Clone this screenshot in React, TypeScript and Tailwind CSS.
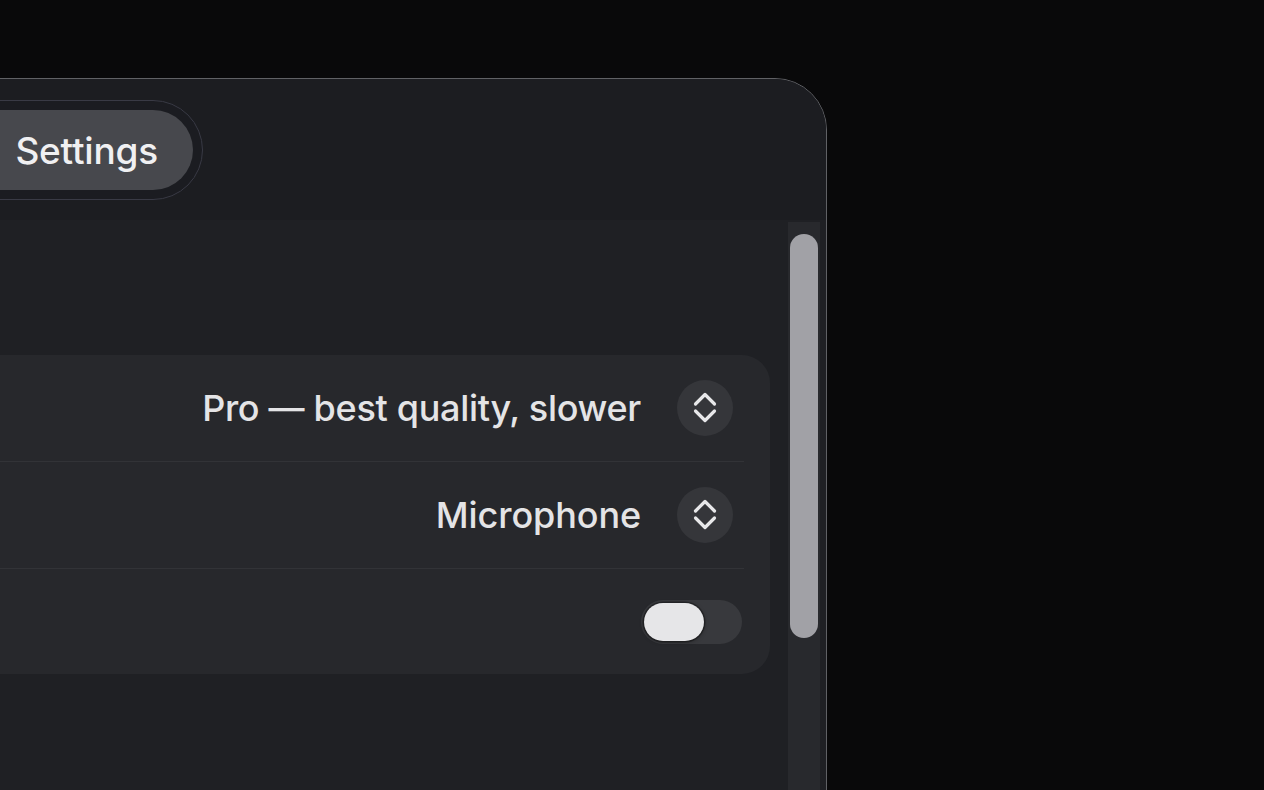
import React from "react";

function Chevrons() {
  return (
    <svg width="24" height="32" viewBox="0 0 24 32" fill="none">
      <path d="M2.5 12 L12 2.5 L21.5 12" stroke="#e8e8ea" strokeWidth="3.2" strokeLinecap="round" strokeLinejoin="round" />
      <path d="M2.5 19 L12 28.5 L21.5 19" stroke="#e8e8ea" strokeWidth="3.2" strokeLinecap="round" strokeLinejoin="round" />
    </svg>
  );
}

function SelectRow({ value, tight }: { value: string; tight?: boolean }) {
  return (
    <div className="mr-[26px] flex h-[107px] items-center justify-end border-b border-[#323337]">
      <span
        className={
          tight
            ? "text-[36px] font-[450] leading-none text-[#e4e4e6] tracking-[-0.3px]"
            : "text-[36px] font-[450] leading-none text-[#e4e4e6] tracking-[-0.1px]"
        }
      >
        {value}
      </span>
      <div className="ml-[36px] mr-[11px] flex h-[56px] w-[56px] items-center justify-center rounded-full bg-[#35363a]">
        <Chevrons />
      </div>
    </div>
  );
}

export default function App() {
  return (
    <div
      className="h-[790px] w-[1264px] overflow-hidden bg-[#09090a] pt-[78px]"
      style={{ fontFamily: "Inter, 'Noto Sans', sans-serif" }}
    >
      <div className="-ml-[100px] h-[760px] w-[927px] overflow-hidden rounded-tr-[52px] border border-[#606165] bg-[#1f2024]">
        {/* header */}
        <div className="h-[141px] bg-[#1c1d21] pt-[21px]">
          <div className="-ml-[40px] flex h-[100px] w-[342px] items-center rounded-full border border-[#393a45] bg-[#1b1c21] px-[9px]">
            <div className="flex h-[80px] flex-1 items-center justify-end rounded-full bg-[#47484d] pr-[35px]">
              <span className="text-[37px] font-[450] leading-none text-[#f0f0f2] tracking-[-0.2px]">Settings</span>
            </div>
          </div>
        </div>
        {/* body */}
        <div className="flex h-[620px] pr-[6px]">
          <div className="flex-1 pr-[18px] pt-[135px]">
            <div className="rounded-[28px] bg-[#27282c]">
              <SelectRow value="Pro — best quality, slower" tight />
              <SelectRow value="Microphone" />
              <div className="flex h-[105px] items-center justify-end pr-[28px]">
                <div className="flex h-[44px] w-[101px] items-center rounded-full bg-[#38393d] px-[3px]">
                  <div className="h-[38px] w-[60px] rounded-full bg-[#e6e6e8] shadow-[0_0_0_1.5px_rgba(0,0,0,0.3),0_1px_4px_rgba(0,0,0,0.4)]" />
                </div>
              </div>
            </div>
          </div>
          <div className="mt-[2px] w-[32px] bg-[#28292d] px-[2px] pt-[12px]">
            <div className="h-[404px] rounded-full bg-[#a1a1a6]" />
          </div>
        </div>
      </div>
    </div>
  );
}
